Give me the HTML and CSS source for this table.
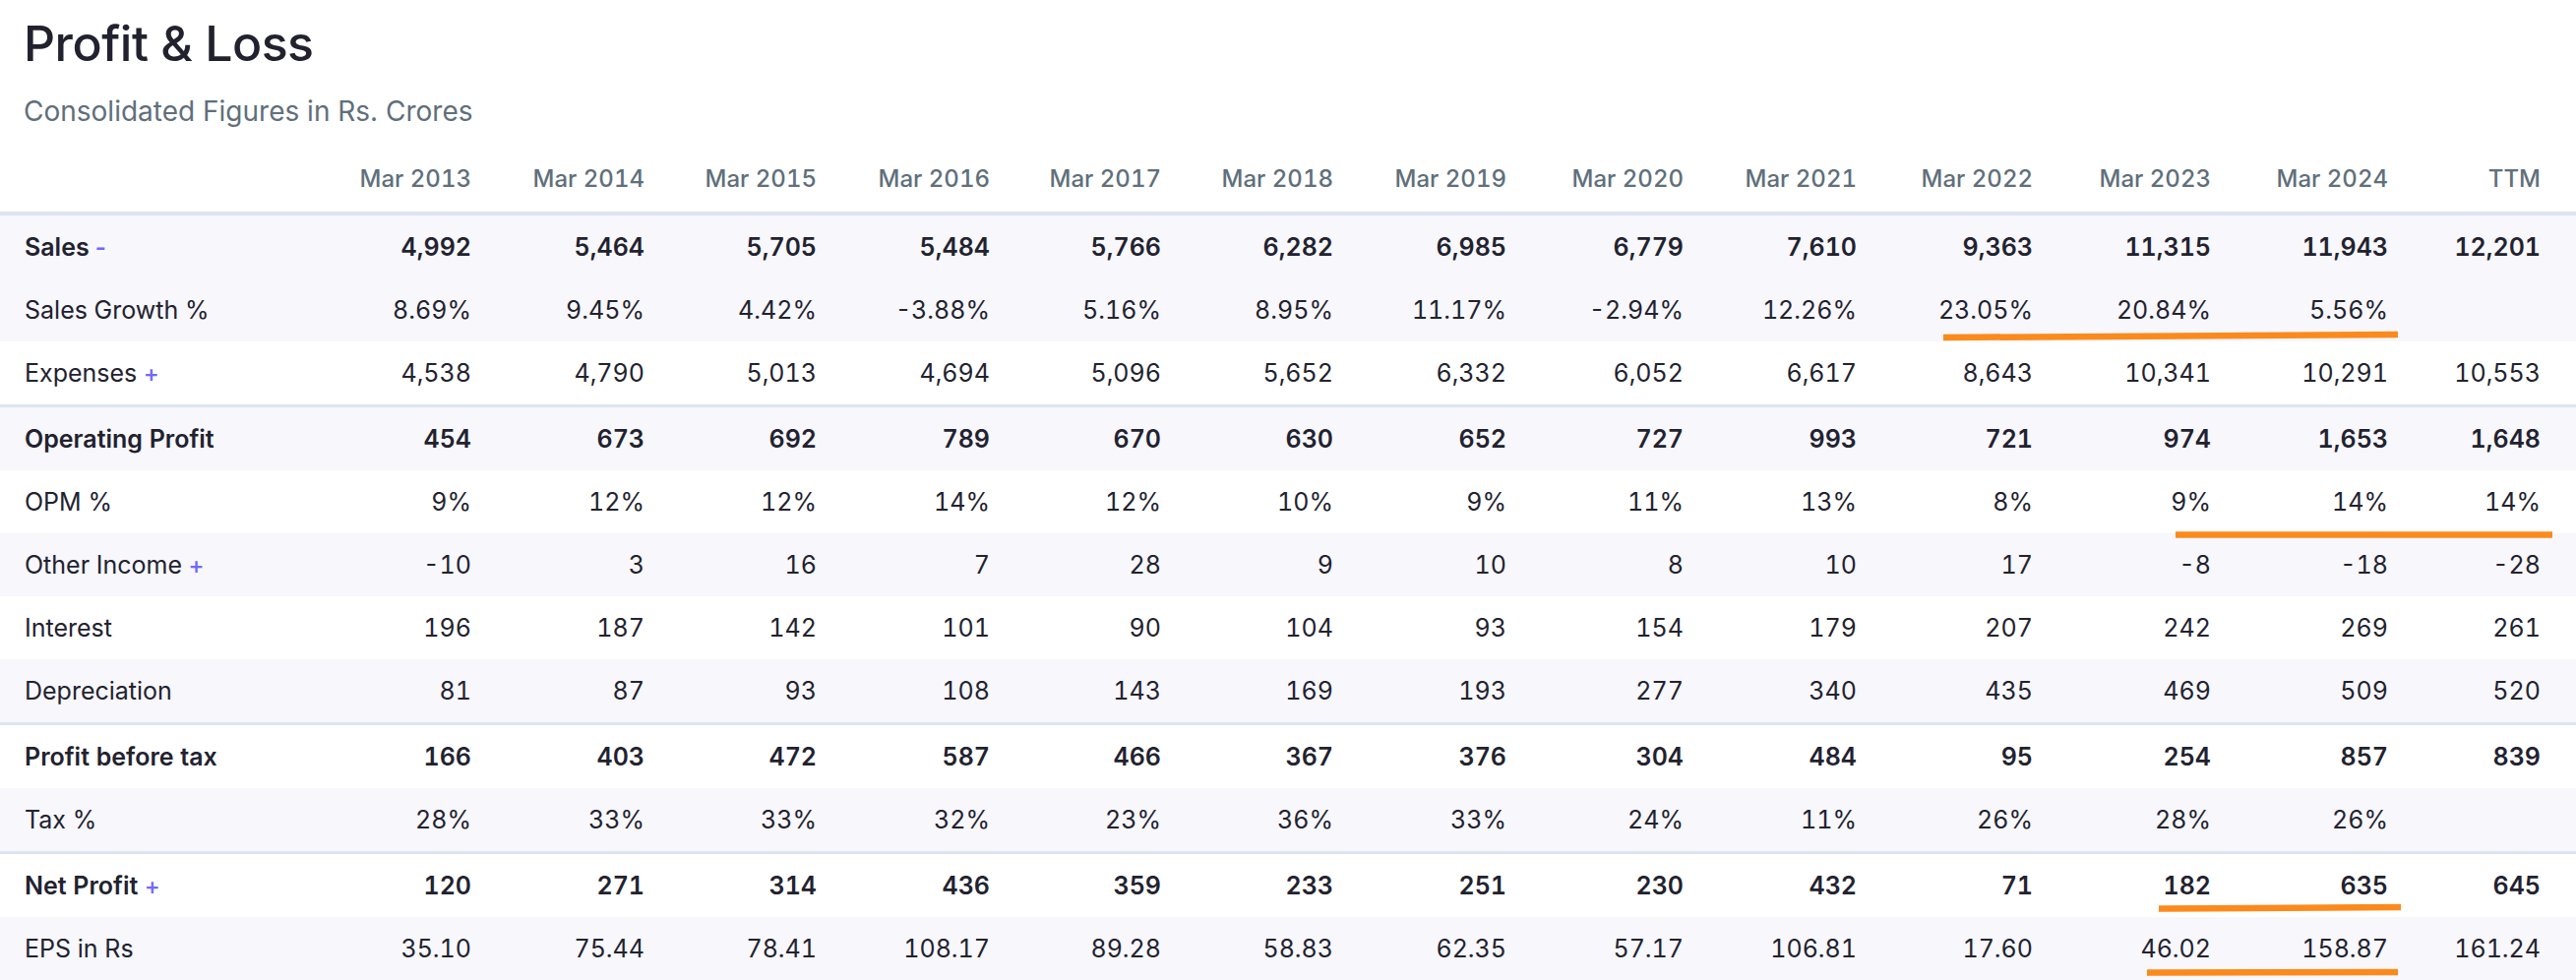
FILE: index.html
```html
<!DOCTYPE html>
<html lang="en">
<head>
<meta charset="utf-8">
<title>Profit &amp; Loss</title>
<link rel="stylesheet" href="styles.css">
</head>
<body>
<section class="pl">
  <header class="pl-head">
    <h2 class="pl-title">Profit &amp; Loss</h2>
    <p class="pl-sub">Consolidated Figures in Rs. Crores</p>
  </header>
  <table class="data">
    <colgroup>
      <col class="c-label"><col class="c-2013"><col class="c-2014"><col class="c-2015"><col class="c-2016"><col class="c-2017"><col class="c-2018"><col class="c-2019"><col class="c-2020"><col class="c-2021"><col class="c-2022"><col class="c-2023"><col class="c-2024"><col class="c-ttm">
    </colgroup>
    <thead>
      <tr><th class="lbl"></th><th>Mar 2013</th><th>Mar 2014</th><th>Mar 2015</th><th>Mar 2016</th><th>Mar 2017</th><th>Mar 2018</th><th>Mar 2019</th><th>Mar 2020</th><th>Mar 2021</th><th>Mar 2022</th><th>Mar 2023</th><th>Mar 2024</th><th>TTM</th></tr>
    </thead>
    <tbody>
      <tr class="strong shade first"><td class="lbl">Sales <span class="tog minus">-</span></td><td>4,992</td><td>5,464</td><td>5,705</td><td>5,484</td><td>5,766</td><td>6,282</td><td>6,985</td><td>6,779</td><td>7,610</td><td>9,363</td><td>11,315</td><td>11,943</td><td>12,201</td></tr>
      <tr class="shade"><td class="lbl">Sales Growth %</td><td>8.69%</td><td>9.45%</td><td>4.42%</td><td>-3.88%</td><td>5.16%</td><td>8.95%</td><td>11.17%</td><td>-2.94%</td><td>12.26%</td><td>23.05%</td><td>20.84%</td><td>5.56%</td><td></td></tr>
      <tr><td class="lbl">Expenses <span class="tog">+</span></td><td>4,538</td><td>4,790</td><td>5,013</td><td>4,694</td><td>5,096</td><td>5,652</td><td>6,332</td><td>6,052</td><td>6,617</td><td>8,643</td><td>10,341</td><td>10,291</td><td>10,553</td></tr>
      <tr class="strong shade ruled"><td class="lbl">Operating Profit</td><td>454</td><td>673</td><td>692</td><td>789</td><td>670</td><td>630</td><td>652</td><td>727</td><td>993</td><td>721</td><td>974</td><td>1,653</td><td>1,648</td></tr>
      <tr><td class="lbl">OPM %</td><td>9%</td><td>12%</td><td>12%</td><td>14%</td><td>12%</td><td>10%</td><td>9%</td><td>11%</td><td>13%</td><td>8%</td><td>9%</td><td>14%</td><td>14%</td></tr>
      <tr class="shade"><td class="lbl">Other Income <span class="tog">+</span></td><td>-10</td><td>3</td><td>16</td><td>7</td><td>28</td><td>9</td><td>10</td><td>8</td><td>10</td><td>17</td><td>-8</td><td>-18</td><td>-28</td></tr>
      <tr><td class="lbl">Interest</td><td>196</td><td>187</td><td>142</td><td>101</td><td>90</td><td>104</td><td>93</td><td>154</td><td>179</td><td>207</td><td>242</td><td>269</td><td>261</td></tr>
      <tr class="shade"><td class="lbl">Depreciation</td><td>81</td><td>87</td><td>93</td><td>108</td><td>143</td><td>169</td><td>193</td><td>277</td><td>340</td><td>435</td><td>469</td><td>509</td><td>520</td></tr>
      <tr class="strong ruled"><td class="lbl">Profit before tax</td><td>166</td><td>403</td><td>472</td><td>587</td><td>466</td><td>367</td><td>376</td><td>304</td><td>484</td><td>95</td><td>254</td><td>857</td><td>839</td></tr>
      <tr class="shade"><td class="lbl">Tax %</td><td>28%</td><td>33%</td><td>33%</td><td>32%</td><td>23%</td><td>36%</td><td>33%</td><td>24%</td><td>11%</td><td>26%</td><td>28%</td><td>26%</td><td></td></tr>
      <tr class="strong ruled"><td class="lbl">Net Profit <span class="tog">+</span></td><td>120</td><td>271</td><td>314</td><td>436</td><td>359</td><td>233</td><td>251</td><td>230</td><td>432</td><td>71</td><td>182</td><td>635</td><td>645</td></tr>
      <tr class="shade"><td class="lbl">EPS in Rs</td><td>35.10</td><td>75.44</td><td>78.41</td><td>108.17</td><td>89.28</td><td>58.83</td><td>62.35</td><td>57.17</td><td>106.81</td><td>17.60</td><td>46.02</td><td>158.87</td><td>161.24</td></tr>
    </tbody>
  </table>
  <svg class="marks" width="2618" height="996" viewBox="0 0 2618 996" aria-hidden="true">
    <path d="M1975 343 L2437 340"/>
    <path d="M2211 543.5 L2594 543.5"/>
    <path d="M2194 923.5 L2440 922"/>
    <path d="M2182 988.5 L2437 988"/>
  </svg>
</section>
</body>
</html>
```

FILE: styles.css
```css
* { box-sizing: border-box; }

html, body {
  margin: 0;
  padding: 0;
  background: #ffffff;
}

body {
  font-family: Inter, "Noto Sans", "Liberation Sans", sans-serif;
  color: #22222f;
  width: 2618px;
  height: 996px;
  overflow: hidden;
}

.pl {
  position: relative;
  width: 2618px;
  padding-top: 14px;
}

.pl-head {
  padding-left: 24px;
}

.pl-title {
  margin: 0;
  font-size: 50px;
  line-height: 60px;
  font-weight: 500;
  letter-spacing: -0.5px;
  color: #22222f;
}

.pl-sub {
  margin: 21px 0 17px;
  font-size: 28px;
  line-height: 36px;
  font-weight: 400;
  color: #606f7b;
}

.data {
  width: 2618px;
  table-layout: fixed;
  border-collapse: separate;
  border-spacing: 0;
  font-variant-numeric: tabular-nums;
}

.c-label { width: 339px; }
.c-2013 { width: 176px; }
.c-2014 { width: 176px; }
.c-2015 { width: 175px; }
.c-2016 { width: 176px; }
.c-2017 { width: 174px; }
.c-2018 { width: 175px; }
.c-2019 { width: 176px; }
.c-2020 { width: 180px; }
.c-2021 { width: 176px; }
.c-2022 { width: 179px; }
.c-2023 { width: 181px; }
.c-2024 { width: 180px; }
.c-ttm { width: 155px; }

.data th {
  padding: 16px 36px 15px 0;
  font-size: 24px;
  line-height: 36px;
  font-weight: 500;
  color: #606f7b;
  text-align: right;
  white-space: nowrap;
  border-bottom: 4px solid #dbe5f0;
}

.data td {
  height: 64px;
  padding: 0 36px 0 0;
  font-size: 25px;
  line-height: 30px;
  font-weight: 400;
  text-align: right;
  vertical-align: middle;
  white-space: nowrap;
  color: #22222f;
}

.data .lbl {
  text-align: left;
  padding-left: 25px;
}

.data tr.shade td {
  background: #f7f7fc;
}

.data tr.strong td {
  font-weight: 600;
}

.data tr.ruled td {
  height: 67px;
  border-top: 3px solid #dbe5f0;
}

.tog {
  color: #6f68ff;
  font-weight: 500;
  font-size: 24px;
}

.tog.minus {
  font-weight: 600;
  margin-left: -3px;
}

.marks {
  position: absolute;
  top: 0;
  left: 0;
  pointer-events: none;
}

.marks path {
  fill: none;
  stroke: #fb8a1d;
  stroke-width: 6.5;
  stroke-linecap: butt;
}
```
